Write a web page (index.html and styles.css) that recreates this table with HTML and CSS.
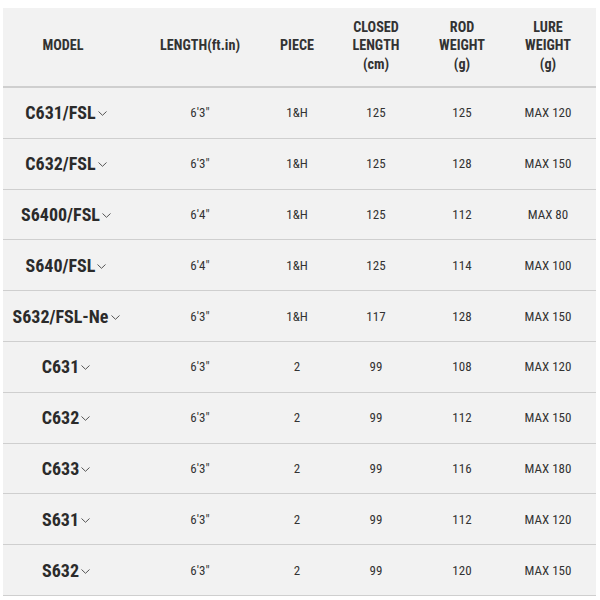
FILE: index.html
```html
<!DOCTYPE html>
<html>
<head>
<meta charset="utf-8">
<link rel="stylesheet" href="styles.css">
</head>
<body>
<table class="spec">
  <colgroup>
    <col class="c1"><col class="c2"><col class="c3"><col class="c4"><col class="c5"><col class="c6">
  </colgroup>
  <thead>
    <tr>
      <th class="model-h">MODEL</th>
      <th>LENGTH(ft.in)</th>
      <th>PIECE</th>
      <th>CLOSED<br>LENGTH<br>(cm)</th>
      <th>ROD<br>WEIGHT<br>(g)</th>
      <th>LURE<br>WEIGHT<br>(g)</th>
    </tr>
  </thead>
  <tbody>
    <tr><td class="model"><span class="name">C631/FSL</span><svg class="chev" viewBox="0 0 9 5"><polyline points="0.5,0.5 4.5,4.3 8.5,0.5"/></svg></td><td>6'3"</td><td>1&amp;H</td><td>125</td><td>125</td><td>MAX 120</td></tr>
    <tr><td class="model"><span class="name">C632/FSL</span><svg class="chev" viewBox="0 0 9 5"><polyline points="0.5,0.5 4.5,4.3 8.5,0.5"/></svg></td><td>6'3"</td><td>1&amp;H</td><td>125</td><td>128</td><td>MAX 150</td></tr>
    <tr><td class="model"><span class="name">S6400/FSL</span><svg class="chev" viewBox="0 0 9 5"><polyline points="0.5,0.5 4.5,4.3 8.5,0.5"/></svg></td><td>6'4"</td><td>1&amp;H</td><td>125</td><td>112</td><td>MAX 80</td></tr>
    <tr><td class="model"><span class="name">S640/FSL</span><svg class="chev" viewBox="0 0 9 5"><polyline points="0.5,0.5 4.5,4.3 8.5,0.5"/></svg></td><td>6'4"</td><td>1&amp;H</td><td>125</td><td>114</td><td>MAX 100</td></tr>
    <tr><td class="model"><span class="name">S632/FSL-Ne</span><svg class="chev" viewBox="0 0 9 5"><polyline points="0.5,0.5 4.5,4.3 8.5,0.5"/></svg></td><td>6'3"</td><td>1&amp;H</td><td>117</td><td>128</td><td>MAX 150</td></tr>
    <tr><td class="model"><span class="name">C631</span><svg class="chev" viewBox="0 0 9 5"><polyline points="0.5,0.5 4.5,4.3 8.5,0.5"/></svg></td><td>6'3"</td><td>2</td><td>99</td><td>108</td><td>MAX 120</td></tr>
    <tr><td class="model"><span class="name">C632</span><svg class="chev" viewBox="0 0 9 5"><polyline points="0.5,0.5 4.5,4.3 8.5,0.5"/></svg></td><td>6'3"</td><td>2</td><td>99</td><td>112</td><td>MAX 150</td></tr>
    <tr><td class="model"><span class="name">C633</span><svg class="chev" viewBox="0 0 9 5"><polyline points="0.5,0.5 4.5,4.3 8.5,0.5"/></svg></td><td>6'3"</td><td>2</td><td>99</td><td>116</td><td>MAX 180</td></tr>
    <tr><td class="model"><span class="name">S631</span><svg class="chev" viewBox="0 0 9 5"><polyline points="0.5,0.5 4.5,4.3 8.5,0.5"/></svg></td><td>6'3"</td><td>2</td><td>99</td><td>112</td><td>MAX 120</td></tr>
    <tr><td class="model"><span class="name">S632</span><svg class="chev" viewBox="0 0 9 5"><polyline points="0.5,0.5 4.5,4.3 8.5,0.5"/></svg></td><td>6'3"</td><td>2</td><td>99</td><td>120</td><td>MAX 150</td></tr>
  </tbody>
</table>
</body>
</html>
```
FILE: styles.css
```css
html, body {
  background: #ffffff;
}
body {
  margin: 8px 4px 0 3px;
  font-family: "Roboto Condensed", Roboto, "Liberation Sans", sans-serif;
  font-stretch: condensed;
  color: #333333;
}
.spec {
  width: 593px;
  border-collapse: collapse;
  table-layout: fixed;
  background: #f2f2f2;
}
.c1 { width: 131px; }
.c2 { width: 132px; }
.c3 { width: 62px; }
.c4 { width: 96px; }
.c5 { width: 76px; }
.c6 { width: 96px; }
.spec th {
  height: 75px;
  padding: 0 0 3px;
  font-size: 14.2px;
  font-weight: 700;
  line-height: 18.5px;
  text-align: center;
  vertical-align: middle;
  border-bottom: 2px solid #cfcfcf;
}
.spec th.model-h {
  padding-right: 11px;
}
.spec td {
  height: 49.8px;
  padding: 0;
  font-size: 13px;
  text-align: center;
  vertical-align: middle;
  border-bottom: 1px solid #cfcfcf;
}
.spec td.model {
  white-space: nowrap;
  padding-right: 5px;
}
.name {
  font-size: 18px;
  font-weight: 700;
  color: #2b2b2b;
}
.chev {
  width: 9px;
  height: 5px;
  margin-left: 2px;
  vertical-align: 3px;
}
.chev polyline {
  fill: none;
  stroke: #555555;
  stroke-width: 1;
}
```
